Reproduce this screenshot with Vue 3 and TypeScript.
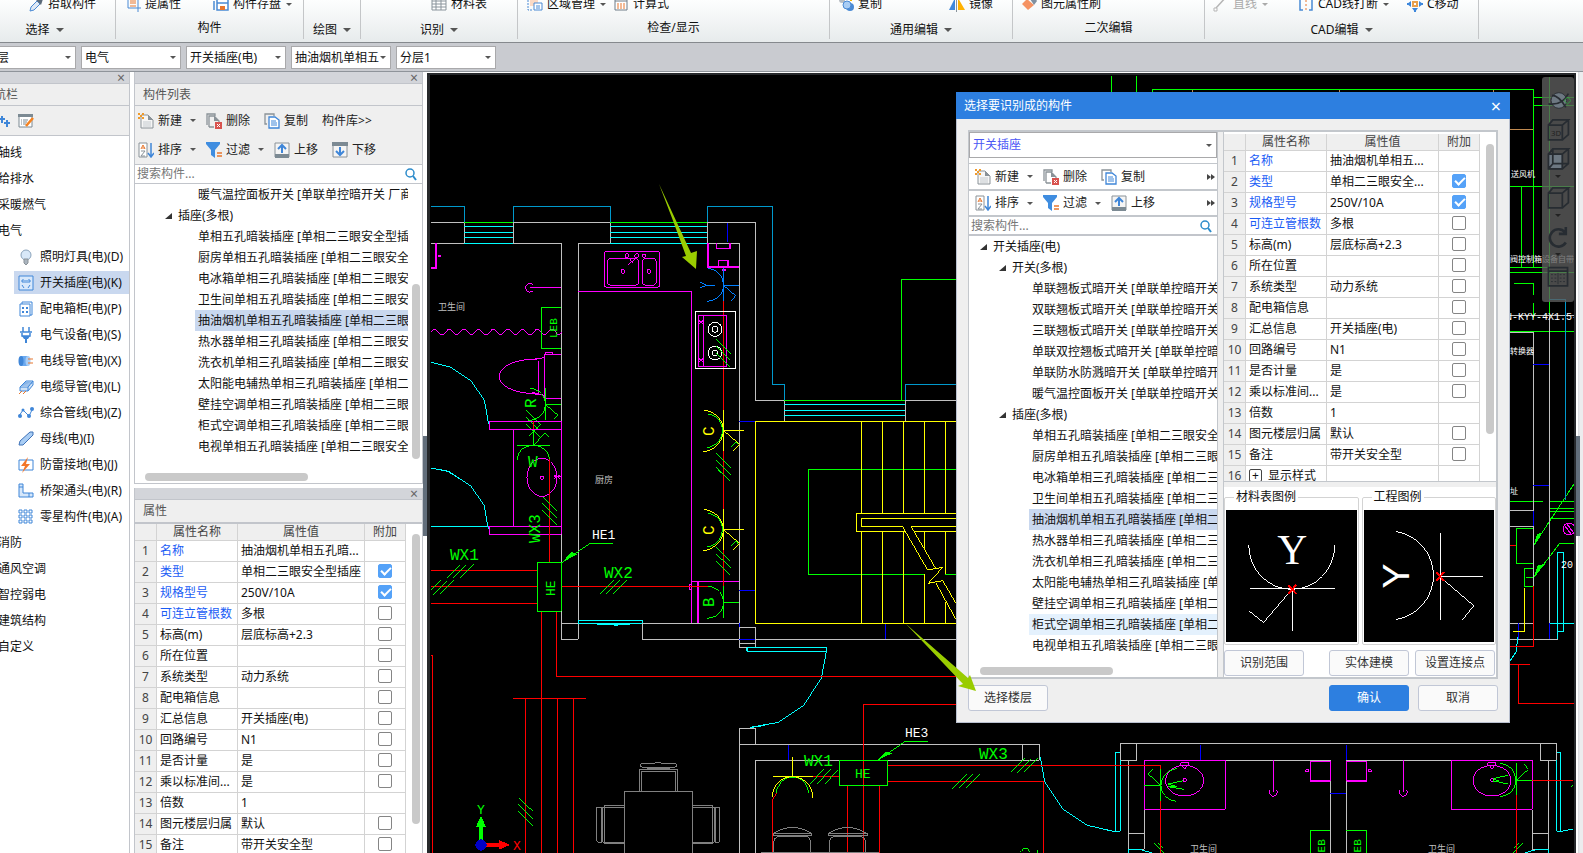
<script setup lang="ts">
import { ref } from 'vue'

interface Tool { icon: string; text: string; caret?: boolean; muted?: boolean }
interface Group { id: string; label: string; caret: boolean; tools: Tool[] }
interface Prop { name: string; value: string; key?: boolean; check?: boolean; on?: boolean; plus?: boolean }
interface Node { text: string; level: number; state?: string }

const groups: Group[] = [
  { id: 'pick', label: '选择', caret: true, tools: [{ icon: 'dropper', text: '拾取构件' }] },
  { id: 'part', label: '构件', caret: false, tools: [{ icon: 'extract', text: '提属性' }, { icon: 'save', text: '构件存盘', caret: true }] },
  { id: 'draw', label: '绘图', caret: true, tools: [] },
  { id: 'ident', label: '识别', caret: true, tools: [{ icon: 'sheet', text: '材料表' }] },
  { id: 'check', label: '检查/显示', caret: false, tools: [{ icon: 'region', text: '区域管理', caret: true }, { icon: 'calc', text: '计算式' }] },
  { id: 'edit', label: '通用编辑', caret: true, tools: [{ icon: 'dup', text: '复制' }, { icon: 'mirror', text: '镜像' }] },
  { id: 'second', label: '二次编辑', caret: false, tools: [{ icon: 'brush', text: '图元属性刷' }] },
  { id: 'cad', label: 'CAD编辑', caret: true, tools: [{ icon: 'line', text: '直线', caret: true, muted: true }, { icon: 'break', text: 'CAD线打断', caret: true }, { icon: 'move', text: 'C移动' }] },
]

const combos = [
  { label: '楼层', value: '首层' },
  { label: '专业', value: '电气' },
  { label: '构件类型', value: '开关插座(电)' },
  { label: '构件', value: '抽油烟机单相五孔暗装插座' },
  { label: '分层', value: '分层1' },
]

const navTop = ['轴线', '给排水', '采暖燃气', '电气']
const navItems = [
  { icon: 'bulb', text: '照明灯具(电)(D)' },
  { icon: 'socket', text: '开关插座(电)(K)' },
  { icon: 'cabinet', text: '配电箱柜(电)(P)' },
  { icon: 'plug', text: '电气设备(电)(S)' },
  { icon: 'conduit', text: '电线导管(电)(X)' },
  { icon: 'cable', text: '电缆导管(电)(L)' },
  { icon: 'poly', text: '综合管线(电)(Z)' },
  { icon: 'busbar', text: '母线(电)(I)' },
  { icon: 'bolt', text: '防雷接地(电)(J)' },
  { icon: 'tray', text: '桥架通头(电)(R)' },
  { icon: 'grid', text: '零星构件(电)(A)' },
]
const navBottom = ['消防', '通风空调', '智控弱电', '建筑结构', '自定义']
const activeNav = ref('开关插座(电)(K)')

const sockets = [
  '单相五孔暗装插座 [单相二三眼安全型插座]',
  '厨房单相五孔暗装插座 [单相二三眼安全型插座]',
  '电冰箱单相三孔暗装插座 [单相二三眼安全型插座]',
  '卫生间单相五孔暗装插座 [单相二三眼安全型插座]',
  '抽油烟机单相五孔暗装插座 [单相二三眼安全型插座]',
  '热水器单相三孔暗装插座 [单相二三眼安全型插座]',
  '洗衣机单相三孔暗装插座 [单相二三眼安全型插座]',
  '太阳能电辅热单相三孔暗装插座 [单相二三眼安全型插座]',
  '壁挂空调单相三孔暗装插座 [单相二三眼安全型插座]',
  '柜式空调单相三孔暗装插座 [单相二三眼安全型插座]',
  '电视单相五孔暗装插座 [单相二三眼安全型插座]',
]
const heater: Node = { text: '暖气温控面板开关 [单联单控暗开关 厂商配套]', level: 3 }
const socketNodes = (hover: number): Node[] =>
  sockets.map((text, i) => ({ text, level: 3, state: i === 4 ? 'selected' : i === hover ? 'hover' : '' }))

const sideTree: Node[] = [heater, { text: '插座(多根)', level: 2 }, ...socketNodes(-1)]
const dialogTree: Node[] = [
  { text: '开关插座(电)', level: 1 },
  { text: '开关(多根)', level: 2 },
  { text: '单联翘板式暗开关 [单联单控暗开关]', level: 3 },
  { text: '双联翘板式暗开关 [单联单控暗开关]', level: 3 },
  { text: '三联翘板式暗开关 [单联单控暗开关]', level: 3 },
  { text: '单联双控翘板式暗开关 [单联单控暗开关]', level: 3 },
  { text: '单联防水防溅暗开关 [单联单控暗开关]', level: 3 },
  heater,
  { text: '插座(多根)', level: 2 },
  ...socketNodes(9),
]

const buildProps = (name: string, type: string): Prop[] => [
  { name: '名称', value: name, key: true },
  { name: '类型', value: type, key: true, check: true, on: true },
  { name: '规格型号', value: '250V/10A', key: true, check: true, on: true },
  { name: '可连立管根数', value: '多根', key: true, check: true },
  { name: '标高(m)', value: '层底标高+2.3', check: true },
  { name: '所在位置', value: '', check: true },
  { name: '系统类型', value: '动力系统', check: true },
  { name: '配电箱信息', value: '', check: true },
  { name: '汇总信息', value: '开关插座(电)', check: true },
  { name: '回路编号', value: 'N1', check: true },
  { name: '是否计量', value: '是', check: true },
  { name: '乘以标准间...', value: '是', check: true },
  { name: '倍数', value: '1' },
  { name: '图元楼层归属', value: '默认', check: true },
  { name: '备注', value: '带开关安全型', check: true },
  { name: '显示样式', value: '', plus: true },
]
const sideProps = ref(buildProps('抽油烟机单相五孔暗...', '单相二三眼安全型插座'))
const dialogProps = ref(buildProps('抽油烟机单相五...', '单相二三眼安全...'))
</script>

<template>
  <div class="app">
    <svg class="defs" aria-hidden="true">
      <symbol id="dropper" viewBox="0 0 16 16"><path d="M2 15l1-4 6-6 3 3-6 6z" fill="#dfe9f5" stroke="#4a8ad4" /><path d="M8 4l5 5 2-6-3-3z" fill="#5c6b7a" /></symbol>
      <symbol id="extract" viewBox="0 0 16 16"><path d="M3 0v12h13M0 3h13v13" fill="none" stroke="#4a8ad4" /><path d="M5 5h6M5 7h6M5 10h6" stroke="#e8772e" /></symbol>
      <symbol id="save" viewBox="0 0 16 16"><path d="M4 2h11v12H4zM1 5v9M4 7h11" fill="#fff" stroke="#4a8ad4" stroke-width="1.5" /><path d="M7 10h5v4H7z" fill="#e8772e" /></symbol>
      <symbol id="sheet" viewBox="0 0 16 16"><path d="M1 1h14v13H1zM1 5h14M1 8h14M1 11h14M5 1v13M10 1v13" fill="#fff" stroke="#89939b" /></symbol>
      <symbol id="region" viewBox="0 0 16 16"><path d="M1 1v13h5M4 2v9" fill="none" stroke="#4a8ad4" stroke-dasharray="2 1" /><path d="M3 1h8v9H3z" fill="#fbd9c4" /><path d="M7 7h8v7H7zM9 10h4M9 12h4" fill="#fff" stroke="#4a8ad4" /></symbol>
      <symbol id="calc" viewBox="0 0 16 16"><path d="M2 1h12v13H2zM2 5h12" fill="#fff" stroke="#6f7c88" /><path d="M4 8h2M7 8h2M10 8h2M4 10h2M7 10h2M10 10h2M4 12h2M7 12h2M10 12h2" stroke="#e8772e" /></symbol>
      <symbol id="dup" viewBox="0 0 16 16"><circle cx="4" cy="4" r="3" fill="#b7bdc3" /><circle cx="12" cy="11" r="4" fill="#4a8ad4" /><circle cx="9" cy="9" r="4" fill="#a9cdf4" stroke="#4a8ad4" /><path d="M10 1h3v4" stroke="#f4b400" stroke-width="2" fill="none" /></symbol>
      <symbol id="mirror" viewBox="0 0 16 16"><path d="M6 2v12H0z" fill="#3f88dc" /><path d="M9 2v12h7z" fill="#ffb100" /><path d="M7.500 0v16" stroke="#89939b" /></symbol>
      <symbol id="brush" viewBox="0 0 16 16"><path d="M1 8l5-5 7 6-6 5z" fill="#f59363" /><path d="M9 3l4-3 3 5-3 4z" fill="#8090a0" /></symbol>
      <symbol id="line" viewBox="0 0 16 16"><path d="M3 12L14 0" stroke="#b5b5b5" stroke-width="1.500" /><path d="M1 12h3v3H1z" fill="#fff" stroke="#b5b5b5" /></symbol>
      <symbol id="break" viewBox="0 0 16 16"><path d="M5 1H2v13h3M11 1h3v13h-3" fill="none" stroke="#4a8ad4" stroke-width="1.500" /><path d="M8 0v15" stroke="#e8772e" stroke-dasharray="2 2" /></symbol>
      <symbol id="move" viewBox="0 0 16 16"><path d="M8 0v4M8 12v4M0 8h4M12 8h4" stroke="#3f88dc" stroke-width="2" /><path d="M0 8l4-3v6zM16 8l-4-3v6zM8 16l-3-4h6zM8 0L5 4h6z" fill="#3f88dc" /><path d="M6 6h4v4H6z" fill="#fff" stroke="#e8a04e" stroke-width="2" /></symbol>
      <symbol id="new" viewBox="0 0 16 16"><path d="M3 2h7l5 5v8H3z" fill="#f6f6f6" stroke="#8a9298" /><path d="M10 2v5h5z" fill="#8a9298" /><path d="M5 9h8M5 11h8M5 13h8" stroke="#c4cacf" /><path d="M0 0h2v2H0zM4 0h2v2H4zM2 2h2v2H2zM0 4h2v2H0zM4 4h2v2H4z" fill="#f09a2a" /></symbol>
      <symbol id="delete" viewBox="0 0 16 16"><path d="M1 12V1h8v2M3 14V3h5l5 5v2M3 14h5" fill="none" stroke="#8a9298" stroke-width="1.300" /><path d="M8 3l5 5H8z" fill="#8a9298" /><path d="M9 9h7v7H9z" fill="#d9534f" /><path d="M11 11l3 3M14 11l-3 3" stroke="#fff" /></symbol>
      <symbol id="copy" viewBox="0 0 16 16"><path d="M3 11H1V1h9v2" fill="none" stroke="#8a9298" stroke-width="1.300" /><path d="M5 4h6l4 3v8H5z" fill="#fff" stroke="#3f86d8" stroke-width="1.300" /><path d="M7 8h5M7 10h6M7 12h6" stroke="#3f86d8" /></symbol>
      <symbol id="sort" viewBox="0 0 16 16"><path d="M1 1h8v14H1z" fill="#fff" stroke="#8a9298" /><path d="M3 7l2-4 2 4M4 6h3" fill="none" stroke="#e8772e" /><path d="M3 9h4l-4 5h4" fill="none" stroke="#8a9298" /><path d="M13 1v13M10 11l3 4 3-4" fill="none" stroke="#3f86d8" stroke-width="1.500" /></symbol>
      <symbol id="filter" viewBox="0 0 16 16"><path d="M0 0h14v2L9 8v8l-4-3V8L0 2z" fill="#3f8de0" /><path d="M11 11h5M11 14h5" stroke="#e8772e" stroke-width="1.500" /></symbol>
      <symbol id="up" viewBox="0 0 16 16"><path d="M1 1h14v14H1z" fill="#f5f5f5" stroke="#8a9298" /><path d="M1 12h14v4H1z" fill="#7c8a93" /><path d="M8 11V3M4 7l4-4 4 4" fill="none" stroke="#3f86d8" stroke-width="2" /></symbol>
      <symbol id="down" viewBox="0 0 16 16"><path d="M1 1h14v14H1z" fill="#f5f5f5" stroke="#8a9298" /><path d="M0 0h16v4H0z" fill="#7c8a93" /><path d="M8 5v8M4 9l4 4 4-4" fill="none" stroke="#3f86d8" stroke-width="2" /></symbol>
      <symbol id="search" viewBox="0 0 16 16"><circle cx="7" cy="7" r="4" fill="none" stroke="#2d8ccb" stroke-width="1.500" /><path d="M10 10l3 4" stroke="#2d8ccb" stroke-width="2" /></symbol>
      <symbol id="plus2" viewBox="0 0 16 16"><path d="M8 3v7M5 6h6M13 7v7M10 10h6" stroke="#3f86d8" stroke-width="2" /></symbol>
      <symbol id="form" viewBox="0 0 16 16"><path d="M1 2h13v12H1z" fill="#fff" stroke="#7c8a93" /><path d="M0 1h15v3H0z" fill="#7c8a93" /><path d="M3 7h1M5 7h5M3 9h1M5 9h4M3 11h1M5 11h3" stroke="#7c8a93" /><path d="M8 13l7-8" stroke="#f5821f" stroke-width="2.500" /></symbol>
      <symbol id="bulb" viewBox="0 0 16 16"><circle cx="8" cy="6" r="5" fill="#d8e8f8" stroke="#8ba3bb" /><path d="M6 10h4v4l-2 2-2-2z" fill="#aab4be" stroke="#8a9298" /></symbol>
      <symbol id="socket" viewBox="0 0 16 16"><path d="M1 1h14v14H1z" fill="#d8e8fb" stroke="#3f86d8" /><path d="M5 4v4M7 5v3M9 5v3M11 4v4M3 6h2M11 6h2" stroke="#3f86d8" /><path d="M4 10l2 3M12 10l-2 3" stroke="#3f86d8" /></symbol>
      <symbol id="cabinet" viewBox="0 0 16 16"><path d="M2 3h10v12H2zM4 3V1h10v13h-2" fill="#fff" stroke="#3f86d8" /><path d="M4 6h2v2H4zM8 6h2v2H8zM4 10h2v2H4zM8 10h2v2H8z" fill="#3f86d8" /></symbol>
      <symbol id="plug" viewBox="0 0 16 16"><path d="M5 0v5M11 0v5M2 5h12M4 6v3h8V6" fill="none" stroke="#3f86d8" stroke-width="1.500" /><path d="M4 9h8l-2 3H6zM7 12h2v4H7z" fill="#3f86d8" /></symbol>
      <symbol id="conduit" viewBox="0 0 16 16"><path d="M3 3h7v10H3z" fill="#6ba9ef" /><ellipse cx="3" cy="8" rx="2.500" ry="5" fill="#3f86d8" /><ellipse cx="10" cy="8" rx="2.500" ry="5" fill="#a9cdf4" /><path d="M10 6h5M10 10h5" stroke="#e8772e" /></symbol>
      <symbol id="cable" viewBox="0 0 16 16"><path d="M2 8l6-6h7v4l-5 6H2zM2 8h8l5-6M10 8v4M4 6h8M6 4h8" fill="#cfe2f7" stroke="#3f86d8" /><path d="M1 15l3-3M5 15l3-3" stroke="#e8772e" /></symbol>
      <symbol id="poly" viewBox="0 0 16 16"><path d="M1 11l4-6 6 6 4-8" fill="none" stroke="#3f86d8" /><circle cx="2" cy="11" r="2" fill="#3f86d8" /><circle cx="5" cy="5" r="1.500" fill="#3f86d8" /><circle cx="11" cy="11" r="2" fill="#3f86d8" /><circle cx="14" cy="4" r="2" fill="#3f86d8" /></symbol>
      <symbol id="busbar" viewBox="0 0 16 16"><path d="M1 14l1-4L12 1h3v3L5 14z" fill="#a9cdf4" stroke="#3f72b8" /></symbol>
      <symbol id="bolt" viewBox="0 0 16 16"><path d="M1 3h14v10H1z" fill="#fff" stroke="#3f86d8" /><path d="M10 0L3 9h4l-3 7 8-9H8z" fill="#f2762a" /></symbol>
      <symbol id="tray" viewBox="0 0 16 16"><path d="M1 1h4v9h10v4H1zM1 4h4M11 10v4" fill="#d6e7fa" stroke="#3f86d8" /></symbol>
      <symbol id="grid" viewBox="0 0 16 16"><path d="M1 1h3v3H1zM6 1h3v3H6zM11 1h3v3h-3zM1 6h3v3H1zM6 6h3v3H6zM11 6h3v3h-3zM1 11h3v3H1zM6 11h3v3H6zM11 11h3v3h-3z" fill="#fff" stroke="#3f86d8" /></symbol>
    </svg>

    <header class="ribbon">
      <section v-for="g in groups" :key="g.id" class="group" :class="'g-' + g.id">
        <div class="tools">
          <button v-for="t in g.tools" :key="t.text" type="button" class="tool" :class="{ muted: t.muted }">
            <svg class="ico"><use :href="'#' + t.icon" /></svg><span>{{ t.text }}</span><i v-if="t.caret" class="caret"></i>
          </button>
        </div>
        <div class="group-label" :class="{ drop: g.caret }">{{ g.label }}<i v-if="g.caret" class="caret big"></i></div>
      </section>
    </header>

    <div class="combobar">
      <label v-for="c in combos" :key="c.label" class="combo">
        <select :aria-label="c.label"><option>{{ c.value }}</option></select><i class="caret"></i>
      </label>
    </div>

    <main class="work">
      <nav class="nav panel">
        <div class="strip"><button type="button" class="x" aria-label="关闭导航栏">×</button></div>
        <h2 class="title">导航栏</h2>
        <div class="nav-tools">
          <button type="button" aria-label="添加"><svg class="ico"><use href="#plus2" /></svg></button>
          <button type="button" aria-label="编辑"><svg class="ico"><use href="#form" /></svg></button>
        </div>
        <ul class="nav-list">
          <li v-for="n in navTop" :key="n" class="cat">{{ n }}</li>
          <li v-for="n in navItems" :key="n.text" class="item" :class="{ active: n.text === activeNav }">
            <button type="button" @click="activeNav = n.text"><svg class="ico"><use :href="'#' + n.icon" /></svg>{{ n.text }}</button>
          </li>
          <li v-for="n in navBottom" :key="n" class="cat">{{ n }}</li>
        </ul>
      </nav>

      <div class="column">
        <section class="panel parts">
          <div class="strip"><button type="button" class="x" aria-label="关闭构件列表">×</button></div>
          <h2 class="title">构件列表</h2>
          <div class="part-tools">
            <div class="row">
              <button type="button" class="cmd wide"><svg class="ico"><use href="#new" /></svg>新建<i class="caret"></i></button>
              <button type="button" class="cmd"><svg class="ico"><use href="#delete" /></svg>删除</button>
              <button type="button" class="cmd"><svg class="ico"><use href="#copy" /></svg>复制</button>
              <button type="button" class="cmd">构件库&gt;&gt;</button>
            </div>
            <div class="row">
              <button type="button" class="cmd wide"><svg class="ico"><use href="#sort" /></svg>排序<i class="caret"></i></button>
              <button type="button" class="cmd wide"><svg class="ico"><use href="#filter" /></svg>过滤<i class="caret"></i></button>
              <button type="button" class="cmd"><svg class="ico"><use href="#up" /></svg>上移</button>
              <button type="button" class="cmd"><svg class="ico"><use href="#down" /></svg>下移</button>
            </div>
          </div>
          <div class="search"><input type="text" placeholder="搜索构件..." aria-label="搜索构件" /><svg class="ico"><use href="#search" /></svg></div>
          <div class="tree-box">
            <ul class="tree">
              <li v-for="(n, i) in sideTree" :key="i" :class="['lv' + n.level, n.state]"><i v-if="n.level < 3" class="fold"></i><span>{{ n.text }}</span></li>
            </ul>
            <div class="vbar"></div>
            <div class="hbar"></div>
          </div>
        </section>

        <section class="panel props">
          <div class="strip"><button type="button" class="x" aria-label="关闭属性">×</button></div>
          <h2 class="title thick">属性</h2>
          <div class="grid-box">
            <table>
              <colgroup><col class="c-no" /><col class="c-name" /><col /><col class="c-chk" /></colgroup>
              <thead><tr><th></th><th>属性名称</th><th>属性值</th><th>附加</th></tr></thead>
              <tbody>
                <tr v-for="(p, i) in sideProps" :key="p.name">
                  <td class="no">{{ i + 1 }}</td>
                  <td :class="{ key: p.key }"><i v-if="p.plus" class="plus">+</i>{{ p.name }}</td>
                  <td>{{ p.value }}</td>
                  <td class="chk"><input v-if="p.check" v-model="p.on" type="checkbox" :aria-label="p.name + '附加'" /></td>
                </tr>
              </tbody>
            </table>
            <div class="rail"><div class="thumb"></div></div>
          </div>
        </section>
      </div>

      <div class="splitter"><i></i></div>

      <section class="canvas">
        <svg class="drawing" viewBox="430 75 1144 778" preserveAspectRatio="xMinYMin slice" role="img" aria-label="电气平面图">
          <!-- bathroom and kitchen, upper part -->
          <g transform="translate(425 180) scale(.33333)">
            <path class="b" d="M18 79H118V127M265 127V79H556V127M847 127V79H1020" />
            <path class="w" d="M18 127H118V190H18M265 127H556V190H460V900M265 127V190H409V900M847 127V190H943V900M847 127H991V661H1020" />
            <path class="g" d="M118 127H265M556 127H847" />
            <path class="c" d="M118 139H265M118 157H265M118 172H265M118 190H265M556 139H847M556 157H847M556 172H847M556 190H847" />
            <path class="m t" d="M33 190V265H18" /><circle class="m" cx="43" cy="228" r="3" />
            <path class="m" d="M409 322H315M323 313a13 13 0 1 0 0 20M18 456q11 -16 22 0t22 0t22 0t22 0t22 0t22 0t22 0t22 0t22 0t22 0t22 0t22 0t22 0t22 0t22 0t22 0t22 0t18 0" />
            <path class="g" d="M409 382H349V505H409" />
            <path class="m" d="M409 523H358V655H409M361 523V517H383V523M340 542V640M345 537C270 535 223 560 223 590S270 640 345 643M318 540L358 533M322 637L358 646" />
            <path class="c" d="M18 547L78 562L138 603L178 660L191 733M18 865L65 872L110 900" />
            <path class="g" d="M361 625V720M361 673H409M361 673L398 705L388 718M316 625C345 628 361 650 361 673S345 718 310 722M277 796H375M325 748V796M325 796L360 760L373 773M277 840C277 812 300 796 325 796S373 815 373 838M303 690l44 44M303 712l36 36M303 732l20 20M345 735l-32 32M325 752l22 22" />
            <path class="m" d="M193 724H409V748H193ZM265 748V900M409 748V900" />
            <ellipse class="m" cx="351" cy="892" rx="45" ry="57" /><circle class="m" cx="351" cy="893" r="5" /><path class="m" d="M386 884l20 12M386 896l20 -12M396 880v20M388 890h20" />
            <path class="r" d="M325 722V748M373 838V900M895 364V700M895 812V900" />
            <rect class="m" x="538" y="214" width="166" height="108" rx="8" /><rect class="m" x="547" y="235" width="94" height="81" rx="10" /><rect class="m" x="652" y="235" width="42" height="81" rx="10" />
            <path class="m" d="M612 234L622 248M632 234L608 257" /><circle class="m" cx="594" cy="274" r="6" /><circle class="m" cx="672" cy="274" r="6" /><circle class="m" cx="606" cy="227" r="6" /><circle class="m" cx="635" cy="227" r="6" /><circle class="m" cx="657" cy="227" r="5" />
            <path class="m" d="M460 334H799V900" />
            <path class="m t" d="M849 190V261H943M875 190V206H916V190M881 258V242H910V258M892 270h10" />
            <path class="n" d="M907 130V187M943 724H991" />
            <path class="s" d="M895 264V364M895 316H943M895 316L932 347L920 362M848 265C880 268 895 290 895 316S880 360 846 364M825 306L845 316L825 324M845 316H870" />
            <rect class="l" x="811" y="394" width="121" height="171" /><rect class="m" x="820" y="408" width="85" height="151" />
            <path class="m" d="M835 408V559M821 418l14 16M835 418l-14 16M821 532l14 16M835 532l-14 16M821 426h14M821 540h14" />
            <circle class="l" cx="870" cy="448" r="21" /><circle class="l" cx="870" cy="448" r="9" /><circle class="l" cx="870" cy="519" r="21" /><circle class="l" cx="870" cy="519" r="9" />
            <path class="g" d="M873 478l44 44M873 498l42 42M873 520l42 40M873 820l44 44M873 840l44 44M873 862l38 38M848 702C880 706 892 730 892 751S880 798 846 803M918 800l15 -15l6 8" />
            <path class="y" d="M895 690V812M895 751H956M895 751L944 793L925 812M837 690C870 694 895 720 895 751S870 812 835 815M1020 724H991V900" />
          </g>
          <!-- bathroom and kitchen, lower part, and dining table -->
          <g transform="translate(425 470) scale(.33333)">
            <path class="m" d="M265 0V169M190 169H409V0M193 169V193H409V169M799 0V460M799 334H943M793 343h7v15h-7z" /><path class="m t" d="M819 334V460" />
            <path class="w" d="M409 193V508H460V0M409 460H460M652 508V460H943V508H652M943 0V532H991V472H943M943 520H991M991 508H1020M943 823V775H991V823M943 823H1020M943 823V1149M1020 871H991V1149" />
            <path class="c" d="M48 0L72 5L138 48L178 108L190 178M18 169H190M460 451H652V460H460ZM515 463H615M568 466h12M966 534V544H1020M991 532H1020M975 773L1020 766" />
            <path class="r" d="M373 0V277M18 301H337M18 349H337M18 400H337M411 349H848M349 424V1149M394 424V619H1020M264 685H483M301 685V1149M397 685V1149M445 685V1149M18 556H22V1149M895 0V118M895 240V349" />
            <path class="g" d="M337 277H409V424H337ZM412 277L496 220H563M66 323L106 283M84 323L124 283M106 323L146 283M18 360L47 330M24 374L66 332M46 371L86 331M526 371L566 331M544 371L584 331M565 371L605 331M352 80l44 44M352 100l44 44M352 122l44 42M873 230l44 44M873 252l44 40M873 272l42 42M880 0l34 32M282 984l42 40M280 1002l44 44M280 1024l43 43M895 349V443M895 397H943M848 349C880 352 895 372 895 397S880 443 846 445M848 130C880 134 892 158 892 178S880 226 846 231M918 228l15 -15l6 8" />
            <path class="gf" d="M412 277L438 246L458 252Z" />
            <path class="y" d="M991 0V460H1020M895 118V240M895 179H956M895 179L944 220L925 239M837 118C870 122 895 148 895 179S870 238 835 242" />
            <path class="n" d="M943 361H991M943 508H991M943 460V472" />
            <path class="k" d="M598 1149V964H803V1149M643 964V898H758V964M650 964V904H752V964M655 892h90a10 6 0 0 0 0 -12h-30q-15 -5 -30 0h-30a10 6 0 0 0 0 12M665 895h70M598 1006H538V1120H598M598 1012H534V1117H598M530 1012h-14v100q0 6 8 6h6zM803 1006H863V1120H803M803 1012H868V1117H803M871 1012h14v100q0 6 -8 6h-6z" />
            <path class="gf" d="M162 1110V1070H153L168 1038L183 1070H174V1110Z" /><path class="rf" d="M180 1119H222V1110L255 1125L222 1139V1131H180Z" /><circle cx="168" cy="1125" r="17" fill="#0000c8" />
          </g>
          <!-- stairwell -->
          <g transform="translate(740 180) scale(.33333)">
            <path class="b" d="M0 79H97V613H133V661M648 613H496V661" />
            <path class="w" d="M0 127H46V661H133V722M496 722V661H648M46 1378H648" />
            <path class="g" d="M133 661H496M648 298H484V661M553 1183H205V868H648M615 1183H648" />
            <path class="c" d="M133 673H496M133 691H496M133 706H496" />
            <path class="y" d="M648 724H46V1330H648M364 724V1000M427 724V1000M490 724V1000M553 724V1000M616 724V1000M364 1054V1330M427 1054V1330M490 1054V1330M553 1183V1330M553 1054V1104M616 1054V1183M616 1265V1330M648 1000H349V1054H496M523 1054H648M648 1015H364V1039H487L563 1170L608 1162L565 1210L608 1202L648 1270M648 1039H513L587 1165M587 1208L648 1318" />
            <path class="n" d="M436 1332V1376M0 1231H46" />
          </g>
          <!-- lower rooms -->
          <g transform="translate(740 600) scale(.33333)">
            <path class="w" d="M0 385H46V433M0 433H898V481H443M298 481H46V759M848 433V481M1141 433V481H1190" />
            <path class="c" d="M22 142V154H259V142H22M259 154L244 235L190 317L115 367L30 382M901 472L914 545L968 627L1042 676L1120 694" />
            <path class="r" d="M0 229H648M648 313H370V759M443 496H1080M443 544H910V759M322 556V759M418 556V759M218 529H298M97 759V600L110 580" />
            <path class="g" d="M298 481H443V556H298ZM412 482L496 424H563M210 551L253 507M232 551L273 507M255 551L294 511M637 566L680 522M657 563L699 522M679 563L719 522M813 516L855 474M832 518L873 476M852 516L893 474M108 580C112 555 130 531 157 531S202 550 206 580M842 757a14 12 0 0 1 28 0M892 750v9" />
            <path class="gf" d="M414 480L438 456L456 460Z" />
            <path class="y" d="M99 529H218M157 470V529M97 590C97 555 125 530 157 530S218 555 218 593" />
            <path class="n" d="M145 435V480" />
            <path class="k" d="M99 706Q99 700 110 694Q157 670 205 694Q217 700 217 706ZM99 700H217M101 759V730Q101 710 118 710H198Q212 710 212 730V759M263 706Q263 700 276 694Q323 670 370 694Q383 700 383 706ZM263 700H383M268 759V730Q268 710 284 710H362Q376 710 376 730V759M62 757H418" />
          </g>
          <!-- mirrored bathrooms -->
          <g transform="translate(1100 710) scale(.33333)">
            <path class="w" d="M61 151V102H1370V151H1321V102M61 151H109V102M85 151V418H133V300M85 370H133M376 151H691V429M739 429V151H1054M1297 300V418H1346V151M1297 370H1346" />
            <path class="c" d="M61 127H46V364M61 151V364H40L0 355M1370 127H1382V364M1370 151V364H1385L1419 357M85 429V418H120L155 429M1346 429V418H1310L1276 429" />
            <path class="m" d="M133 151H376V298H133ZM1054 151H1297V298H1054ZM520 151V245M511 239a12 12 0 1 0 18 0M910 151V245M901 239a12 12 0 1 0 18 0M631 154H691V214H631ZM740 154H800V214H740ZM618 180h9v6h-9zM805 180h9v6h-9zM242 158h24v8h-24zM248 168l6 10l6 -10zM1164 158h24v8h-24zM1170 168l6 10l6 -10z" />
            <path class="m t" d="M631 213H691M740 213H800" />
            <ellipse class="m" cx="254" cy="212" rx="57" ry="46" /><ellipse class="m" cx="1176" cy="212" rx="57" ry="46" /><circle class="m" cx="254" cy="210" r="5" /><circle class="m" cx="1176" cy="210" r="5" />
            <path class="n" d="M301 105V150M739 105V151M691 250H739" />
            <path class="g" d="M133 226H181M181 178V273M181 226L145 192L158 178M230 176C198 180 183 205 183 226S198 270 228 274M250 212l-45 10l25 8l-25 0M205 230l47 8M691 361H631V429M739 361H799V429M162 400l30 29M175 400l15 15M1250 211H1297M1249 159V256M1249 211L1285 178L1272 162M1200 160C1235 164 1247 190 1247 211S1235 256 1200 260M1223 196l-45 10l20 8l-20 0M1178 212l46 10M1268 400l-30 29M1255 400l-15 15M1411 232l8 -8" />
            <path class="r" d="M-20 166H181V178M181 273V429M1297 211H1419M1249 256V429" />
          </g>
          <!-- equipment room at the right edge -->
          <g class="edge">
            <path class="g" d="M1111 76V92M1136 76V92M1152 92V89H1533V267M1533 97H1574M1533 105H1574M1549 77V315H1574M1510 186H1574M1521 186V267M1510 267H1549M1510 272H1574M1514 283H1533V295M1533 303V318M1510 331H1574M1510 501H1543M1549 501H1574M1549 508H1574M1549 511H1574M1549 518H1574M1574 484L1534 545M1574 543H1560L1534 577M1533 528H1516V563H1533M1533 568H1524V586H1533M1526 577H1533" />
            <path class="gf" d="M1534 545L1537 534L1543 532Z" /><path class="gf" d="M1534 577L1538 565L1545 564Z" />
            <path d="M1510 129H1533M1192 90V92M1339 90V92M1493 90V92" stroke="#c08a50" fill="none" />
            <path class="w" d="M1510 315H1574M1533 332V511M1510 332H1533M1549 315V639M1510 510H1533M1510 526H1533V639M1510 639H1557V556M1510 623H1533" />
            <path class="b" d="M1549 299H1565V500" />
            <path class="c" d="M1557 639V552H1563V631H1557M1549 623H1574M1518 637L1516 652L1510 661" />
            <path class="n" d="M1533 364H1549M1533 485H1549M1533 511V526M1518 623V639M1549 623V639" />
            <path class="y" d="M1524 588V631H1513" />
            <path class="r" d="M1510 545H1516M1533 586V646H1510M1510 664H1530M1518 664V703H1574" />
            <circle class="m" cx="1569" cy="529" r="6" /><path class="m" d="M1565 526l6 8M1567 524l6 8" />
          </g>
          <!-- annotations -->
          <g class="notes">
            <text x="438" y="310" class="room">卫生间</text>
            <text x="595" y="483" class="room">厨房</text>
            <text x="1190" y="852" class="room">卫生间</text>
            <text x="1428" y="852" class="room">卫生间</text>
            <g class="green">
              <text x="450" y="560">WX1</text><text x="604" y="578">WX2</text>
              <text x="804" y="766">WX1</text><text x="979" y="759">WX3</text><text x="855" y="778" class="he">HE</text>
              <text transform="translate(540 543) rotate(-90)">WX3</text>
              <text transform="translate(555 596) rotate(-90)" class="he">HE</text>
              <text transform="translate(557 338) rotate(-90)" class="sm">LEB</text>
              <text transform="translate(536 408) rotate(-90)">R</text>
              <text x="528" y="467">W</text>
              <text transform="translate(714 607) rotate(-90)">B</text>
              <text transform="translate(1325 859) rotate(-90)" class="sm">LEB</text>
              <text transform="translate(1361 859) rotate(-90)" class="sm">LEB</text>
              <text x="481" y="814" class="axis">Y</text>
            </g>
            <text x="517" y="850" class="axis red">X</text>
            <text class="yellow" transform="translate(714 436) rotate(-90)">C</text>
            <text class="yellow" transform="translate(714 535) rotate(-90)">C</text>
            <text x="592" y="539" class="he">HE1</text><text x="905" y="737" class="he">HE3</text>
            <text x="1511" y="177" class="tag">送风机</text>
            <text x="1510" y="262" class="tag">阀控制箱设备自带</text>
            <text x="1506" y="320" class="cap">N-KYY-4X1.5-</text>
            <text x="1510" y="354" class="tag">转换器</text>
            <text x="1510" y="494" class="tag">址</text>
            <text x="1561" y="568" class="cap">20</text>
          </g>
        </svg>

        <div class="viewbar">
          <button type="button" aria-label="动态观察"><svg viewBox="0 0 30 28"><circle cx="16" cy="14" r="9" class="vf" /><path class="vs" d="M4 18Q20 20 27 6M8 8Q16 8 24 22" /><path d="M22 14l4 -4l4 4l-4 4z" fill="none" stroke="#2fae3c" /></svg></button>
          <button type="button" aria-label="三维"><svg viewBox="0 0 30 28"><path class="vs" d="M4 9H20V26H4ZM4 9L9 3H27L20 9M27 3V20L20 26" /><text x="7" y="22" class="vt">3D</text></svg></button>
          <button type="button" aria-label="俯视"><svg viewBox="0 0 30 28"><path class="vf" d="M4 9H20V26H4Z" /><path class="vs" d="M4 9H20V26H4ZM4 9L9 3H27L20 9M27 3V20L20 26M9 3V20L4 26M9 20H27" /></svg></button>
          <i class="caret"></i>
          <button type="button" aria-label="轴测"><svg viewBox="0 0 30 28"><path class="vs" d="M4 9H20V26H4ZM4 9L9 3H27L20 9M27 3V20L20 26" /></svg></button>
          <i class="caret"></i>
          <button type="button" aria-label="旋转"><svg viewBox="0 0 30 28"><path class="vs bold" d="M24 21A10 10 0 1 1 23 9M24 3V11H16" /></svg></button>
          <i class="caret"></i>
          <button type="button" aria-label="显示设置"><svg viewBox="0 0 30 28"><path class="vs" d="M4 5H26V26H4ZM4 9H26" /><path class="vd" d="M15 11V24M7 13h2M11 13h2M7 17h2M11 17h2M7 21h2M11 21h2M17 13h2M21 13h2M17 17h2M21 17h2M17 21h2M21 21h2" /></svg></button>
        </div>
      </section>

      <div class="splitter right"><i></i></div>
    </main>

    <section class="dialog" role="dialog" aria-labelledby="dialog-title">
      <header class="dialog-head"><h1 id="dialog-title">选择要识别成的构件</h1><button type="button" aria-label="关闭">×</button></header>
      <div class="dialog-body">
        <div class="frame">
          <div class="picker">
            <label class="combo type"><select aria-label="构件类型"><option>开关插座</option></select><i class="caret"></i></label>
            <div class="bar">
              <button type="button" class="cmd wide"><svg class="ico"><use href="#new" /></svg>新建<i class="caret"></i></button>
              <button type="button" class="cmd"><svg class="ico"><use href="#delete" /></svg>删除</button>
              <button type="button" class="cmd"><svg class="ico"><use href="#copy" /></svg>复制</button>
              <button type="button" class="more" aria-label="更多"><i></i><i></i></button>
            </div>
            <div class="bar">
              <button type="button" class="cmd wide"><svg class="ico"><use href="#sort" /></svg>排序<i class="caret"></i></button>
              <button type="button" class="cmd wide"><svg class="ico"><use href="#filter" /></svg>过滤<i class="caret"></i></button>
              <button type="button" class="cmd"><svg class="ico"><use href="#up" /></svg>上移</button>
              <button type="button" class="more" aria-label="更多"><i></i><i></i></button>
            </div>
            <div class="search"><input type="text" placeholder="搜索构件..." aria-label="搜索构件" /><svg class="ico"><use href="#search" /></svg></div>
            <div class="tree-box">
              <ul class="tree">
                <li v-for="(n, i) in dialogTree" :key="i" :class="['lv' + n.level, n.state]"><i v-if="n.level < 3" class="fold"></i><span>{{ n.text }}</span></li>
              </ul>
              <div class="hbar"></div>
            </div>
          </div>
          <div class="detail">
            <div class="grid-box">
              <table>
                <colgroup><col class="c-no" /><col class="c-name" /><col /><col class="c-chk" /></colgroup>
                <thead><tr><th></th><th>属性名称</th><th>属性值</th><th>附加</th></tr></thead>
                <tbody>
                  <tr v-for="(p, i) in dialogProps" :key="p.name">
                    <td class="no">{{ i + 1 }}</td>
                    <td :class="{ key: p.key }"><i v-if="p.plus" class="plus">+</i>{{ p.name }}</td>
                    <td>{{ p.value }}</td>
                    <td class="chk"><input v-if="p.check" v-model="p.on" type="checkbox" :aria-label="p.name + '附加'" /></td>
                  </tr>
                </tbody>
              </table>
              <div class="rail"><div class="thumb"></div></div>
            </div>
            <div class="legends">
              <fieldset>
                <legend>材料表图例</legend>
                <svg viewBox="0 0 132 132">
                  <path d="M23 35A43 44 0 0 0 110 35M24 79H110M67 79V122M23 101L38 113L67 79" /><path class="hit" d="M63 75l8 9M71 75l-8 9" />
                  <text x="67" y="54" class="serif">Y</text>
                </svg>
              </fieldset>
              <fieldset>
                <legend>工程图例</legend>
                <svg viewBox="0 0 132 132">
                  <path d="M32 21A45 45 0 0 1 32 110M77 22V110M77 66H120M77 67L111 96L99 111" /><path class="hit" d="M73 62l8 9M81 62l-8 9" />
                  <text transform="translate(46 66) rotate(-90)">Y</text>
                </svg>
              </fieldset>
            </div>
            <div class="actions">
              <button type="button" class="btn">识别范围</button>
              <button type="button" class="btn push">实体建模</button>
              <button type="button" class="btn">设置连接点</button>
            </div>
          </div>
        </div>
        <footer class="dialog-foot">
          <button type="button" class="btn">选择楼层</button>
          <button type="button" class="btn primary push">确认</button>
          <button type="button" class="btn">取消</button>
        </footer>
      </div>
    </section>

    <svg class="pointers" viewBox="0 0 1583 853" preserveAspectRatio="xMinYMin slice" aria-hidden="true">
      <path d="M659 184L691 253L697 251L696 269L682 257L686 256L672 218Z" />
      <path d="M906 624L968 678L970 675L976 691L958 686L963 684Z" />
    </svg>
  </div>
</template>

<style>
html, body { margin: 0; overflow: hidden; }
</style>

<style scoped>
.app { position: relative; display: flex; flex-direction: column; height: 100vh; overflow: hidden; background: #fff; color: #111; font: 12px/18px "Noto Sans", "Noto Sans CJK SC", sans-serif; }
.app * { box-sizing: border-box; }
button, input, select { font: inherit; color: inherit; margin: 0; padding: 0; border: 0; background: none; }
h1, h2, ul, fieldset { margin: 0; padding: 0; font: inherit; list-style: none; border: 0; min-width: 0; }
.defs { position: absolute; width: 0; height: 0; }
.ico { width: 16px; height: 16px; flex: none; display: block; }
.caret { flex: none; width: 0; height: 0; border: 3px solid transparent; border-top-color: #555; border-bottom: 0; }
.caret.big { border-width: 4px 4px 0; margin-left: 6px; }

.ribbon { flex: none; display: flex; height: 43px; overflow: hidden; background: linear-gradient(#fdfefe, #e7ebec); border-bottom: 1px solid #85898d; }
.group { flex: none; height: 39px; border-right: 1px solid #c4c6c8; display: flex; flex-direction: column; overflow: hidden; }
.tools { display: flex; height: 13px; flex: none; align-items: flex-end; }
.tool { display: flex; align-items: center; gap: 3px; height: 18px; white-space: nowrap; }
.tool .ico { margin-right: 1px; }
.tool .caret { margin-left: 2px; }
.tool.muted { color: #aaa; }
.tool.muted .caret { border-top-color: #aaa; }
.group-label { margin-top: 6px; display: flex; align-items: center; justify-content: center; white-space: nowrap; }
.group-label.drop { margin-top: 8px; }
.g-pick { width: 116px; } .g-pick .tools { padding-left: 28px; } .g-pick .group-label { padding-right: 26px; }
.g-part { width: 188px; } .g-part .tools { padding-left: 9px; gap: 32px; }
.g-draw { width: 57px; }
.g-ident { width: 157px; } .g-ident .tools { padding-left: 70px; }
.g-check { width: 312px; } .g-check .tools { padding-left: 9px; gap: 7px; }
.g-edit { width: 183px; } .g-edit .tools { padding-left: 8px; gap: 67px; }
.g-second { width: 192px; } .g-second .tools { padding-left: 8px; }
.g-cad { width: 274px; } .g-cad .tools { padding-left: 8px; gap: 30px; } .g-cad .tool:nth-child(3) { margin-left: -12px; }

.combobar { flex: none; display: flex; gap: 5px; height: 29px; padding: 3px 0 2px; background: #c9cbd0; border-bottom: 1px solid #8f949a; }
.combo { position: relative; display: flex; align-items: center; width: 100px; height: 23px; background: #fff; border: 1px solid #a9a9ab; }
.combobar .combo:first-child { margin-left: -24px; }
.combobar .combo:first-child select { padding-left: 8px; }
.combo select { appearance: none; width: 100%; height: 100%; padding: 0 11px 0 3px; outline: 0; }
.combo .caret { position: absolute; right: 4px; pointer-events: none; }

.work { flex: 1; min-height: 0; display: flex; }
.panel { border: solid #c2c5cb; border-width: 0 1px; display: flex; flex-direction: column; background: #fff; }
.strip { flex: none; height: 12px; display: flex; justify-content: flex-end; align-items: center; padding-right: 4px; background: #d3d5da; border-bottom: 1px solid #c2c5cb; }
.x { font-size: 14px; line-height: 12px; color: #666; }
.title { flex: none; height: 22px; line-height: 21px; padding-left: 8px; background: #efefef; color: #555; border-bottom: 1px solid #c2c5cb; white-space: nowrap; }
.title.thick { border-bottom-width: 2px; height: 24px; }
.nav { flex: none; width: 130px; border-left: 0; overflow: hidden; }
.nav .title { text-indent: -26px; }
.nav-tools { flex: none; display: flex; gap: 8px; align-items: center; height: 30px; background: #efefef; border-bottom: 1px solid #c2c5cb; }
.nav-tools button:first-child { margin-left: -6px; }
.nav-list { padding-top: 5px; }
.nav-list li { height: 23px; line-height: 23px; margin-bottom: 3px; white-space: nowrap; }
.cat { margin-left: -2px; }
.item { margin-left: 14px; }
.item.active { background: #c9d8ef; }
.item button { display: flex; align-items: center; gap: 6px; padding-left: 4px; line-height: 23px; }

.column { flex: none; width: 289px; margin-left: 4px; display: flex; flex-direction: column; gap: 4px; min-height: 0; }
.parts { flex: none; height: 412px; border-bottom: 1px solid #c2c5cb; }
.part-tools { background: #efefef; border-bottom: 1px solid #c2c5cb; height: 59px; }
.part-tools .row { display: flex; gap: 14px; height: 29px; align-items: center; padding-left: 3px; }
.cmd { display: flex; align-items: center; gap: 4px; white-space: nowrap; color: #222; }
.cmd .caret { margin-left: 4px; }
.cmd.wide { margin-right: -4px; }
.search { flex: none; height: 19px; display: flex; align-items: center; padding: 0 3px 0 2px; border-bottom: 1px solid #c2c5cb; background: #fff; }
.search input { flex: 1; min-width: 0; outline: 0; height: 18px; }
.search input::placeholder { color: #777; }
.tree-box { position: relative; flex: 1; min-height: 0; }
.tree { margin-right: 14px; overflow: hidden; }
.tree li { display: flex; align-items: center; height: 21px; white-space: nowrap; overflow: hidden; }
.tree .lv2 { padding-left: 30px; }
.tree .lv3 { margin-left: 60px; padding-left: 3px; }
.fold { flex: none; border: solid transparent; border-width: 0 0 6px 7px; border-bottom-color: #333; margin-right: 6px; }
.tree .selected { background: #c9d8ef; }
.tree .hover { background: #e4f1fd; }
.vbar, .hbar { position: absolute; background: #c9c9c9; border-radius: 4px; }
.vbar { right: 2px; top: 100px; width: 8px; height: 175px; }
.hbar { left: 10px; bottom: 2px; width: 163px; height: 8px; }
.props { flex: 1; min-height: 0; overflow: hidden; }

.grid-box { display: flex; flex: 1; min-height: 0; overflow: hidden; }
table { flex: 1; width: 0; table-layout: fixed; border-collapse: separate; border-spacing: 0; align-self: flex-start; }
.c-no { width: 22px; } .c-name { width: 81px; } .c-chk { width: 41px; }
th, td { padding: 0; height: 21px; line-height: 20px; border: solid #d3d3d3; border-width: 0 1px 1px 0; overflow: hidden; white-space: nowrap; text-align: left; }
th { height: 17px; line-height: 16px; font-weight: 400; text-align: center; background: #efefef; color: #444; }
td { padding-left: 3px; }
td.no { padding: 0; text-align: center; background: #efefef; color: #444; }
td.key { color: #1a5cf5; }
td.chk { padding: 0; text-align: center; vertical-align: top; }
td input { appearance: none; display: block; width: 14px; height: 14px; margin: 2px auto 0; border: 1px solid #858585; border-radius: 2px; background: #fff; }
td input:checked { border-color: #55a2f8; background: #55a2f8; }
td input:checked::after { content: ""; display: block; width: 8px; height: 4px; margin: 2px 2px; border: solid #fff; border-width: 0 0 2px 2px; transform: rotate(-45deg); }
.plus { display: inline-block; width: 13px; height: 13px; line-height: 11px; text-align: center; font-style: normal; border: 1px solid #444; border-radius: 2px; margin-right: 6px; }
.rail { flex: none; width: 16px; padding: 10px 2px 0 6px; }
.thumb { height: 290px; border-radius: 4px; background: #c9c9c9; }

.splitter { flex: none; width: 4px; padding-top: 364px; background: #fff; }
.splitter i { display: block; height: 100px; background: #626e7b; }
.splitter.right { width: 7px; background: linear-gradient(90deg, #fff 2px, #d6d8dc 2px, #ececee 4px); }
.splitter.right i { width: 4px; }

.canvas { position: relative; flex: 1; min-width: 0; margin-top: 1px; background: #000; border: solid #26282b; border-width: 2px 2px 0 3px; overflow: hidden; }
.drawing { display: block; width: 100%; height: 100%; shape-rendering: crispEdges; }
.drawing path, .drawing rect, .drawing circle, .drawing ellipse { stroke-width: 3px; }
.drawing .edge path, .drawing .edge circle { stroke-width: 1px; }
.drawing path.t { stroke-width: 5px; }
.w, .g, .c, .m, .r, .y, .b, .n, .s, .l, .k { fill: none; }
.w { stroke: #c0c0c0; } .g { stroke: #00ff00; } .c { stroke: #00ffff; } .m { stroke: #ff00ff; } .r { stroke: #ff0000; } .y { stroke: #ffff00; }
.b { stroke: #0099cc; } .n { stroke: #0000ff; } .s { stroke: #007fff; } .l { stroke: #fff; } .k { stroke: #808080; }
.gf { fill: #00ff00; } .rf { fill: #ff0000; }
.notes { fill: #fff; font: 16px "Liberation Mono", "Noto Sans CJK SC", monospace; }
.notes .green { fill: #00ff00; } .notes .yellow { fill: #ffff00; }
.notes .sm { font-size: 11px; } .notes .cap { font-size: 10px; } .notes .he { font-size: 13px; }
.notes .room { font-size: 9px; fill: #c0c0c0; } .notes .tag { font-size: 8px; }
.notes .axis { font-size: 13px; text-anchor: middle; } .notes .red { fill: #ff0000; }

.viewbar { position: absolute; top: 2px; right: 0; width: 32px; height: 225px; padding-top: 10px; display: flex; flex-direction: column; align-items: center; gap: 2px; border-radius: 3px; background: rgba(92, 92, 92, .8); }
.viewbar svg { display: block; width: 26px; height: 27px; }
.viewbar .caret { margin: 1px 0 4px; border-top-color: #222; }
.vs { fill: none; stroke: #272c32; stroke-width: 2px; } .vs.bold { stroke-width: 3px; } .vf { fill: #6d7882; stroke: #272c32; } .vd { fill: none; stroke: #272c32; stroke-width: 1px; }
.vt { font-size: 9px; fill: #222; }

.dialog { position: absolute; top: 92px; right: 73px; width: 554px; height: 631px; display: flex; flex-direction: column; background: #efefef; border: 1px solid #b9c0cf; border-top: 0; }
.dialog-head { flex: none; height: 27px; margin: 0 -1px; padding: 0 9px 0 8px; display: flex; align-items: center; justify-content: space-between; background: #2d7fe0; color: #fff; }
.dialog-head button { font-size: 18px; line-height: 18px; }
.dialog-body { flex: 1; min-height: 0; padding: 11px 11px 11px; display: flex; flex-direction: column; }
.frame { flex: 1; min-height: 0; display: flex; justify-content: space-between; border: solid #c3c7cc; border-width: 2px 2px 2px 1px; gap: 5px; }
.picker { flex: none; width: 249px; display: flex; flex-direction: column; background: #fff; border-right: 1px solid #c3c7cc; }
.combo.type { flex: none; width: 100%; height: 26px; margin-bottom: 5px; color: #4a56f5; }
.picker .bar { flex: none; display: flex; gap: 14px; align-items: center; height: 26px; padding-left: 6px; border-top: 1px solid #c3c7cc; }
.picker .bar + .bar { border-top-width: 2px; }
.more { margin-left: auto; margin-right: 2px; display: flex; }
.more i { border: solid transparent; border-width: 3px 0 3px 4px; border-left-color: #444; }
.picker .search { height: 21px; border-top: 2px solid #c3c7cc; border-bottom-width: 2px; }
.picker .tree { margin-right: 0; }
.picker .lv1 { padding-left: 11px; }
.picker .hbar { left: 11px; width: 133px; }
.detail { flex: 1; min-width: 0; display: flex; flex-direction: column; background: #fff; border-left: 1px solid #c3c7cc; }
.detail .grid-box { flex: none; height: 350px; padding-top: 2px; border-bottom: 1px solid #c3c7cc; }
.legends { display: flex; gap: 3px; height: 163px; padding-top: 6px; background: linear-gradient(#efefef 5px, #fff 5px); }
.legends fieldset { flex: 1; position: relative; height: 157px; padding: 4px 1px 0; border: 1px solid #d3d3d3; border-radius: 2px; }
.legends legend { margin-left: 8px; padding: 0 2px; line-height: 18px; }
.legends svg { display: block; width: 100%; height: 132px; background: #000; }
.legends path { fill: none; stroke: #fff; shape-rendering: crispEdges; }
.legends path.hit { stroke: #f00; stroke-width: 2px; }
.legends text { fill: #fff; font: 38px "Liberation Sans", sans-serif; text-anchor: middle; }
.legends text.serif { font: 42px "Liberation Serif", serif; }
.actions { display: flex; gap: 6px; padding: 5px 1px 0 0; }
.btn { width: 80px; height: 26px; border: 1px solid #c1c7d6; border-radius: 3px; background: #fafafa; color: #333; }
.push { margin-left: auto; }
.primary { background: #2d7fe0; border-color: #2d7fe0; color: #fff; }
.dialog-foot { flex: none; display: flex; gap: 9px; padding-top: 6px; }
.pointers { position: absolute; inset: 0; width: 100%; height: 100%; pointer-events: none; fill: #99cc00; }
</style>
